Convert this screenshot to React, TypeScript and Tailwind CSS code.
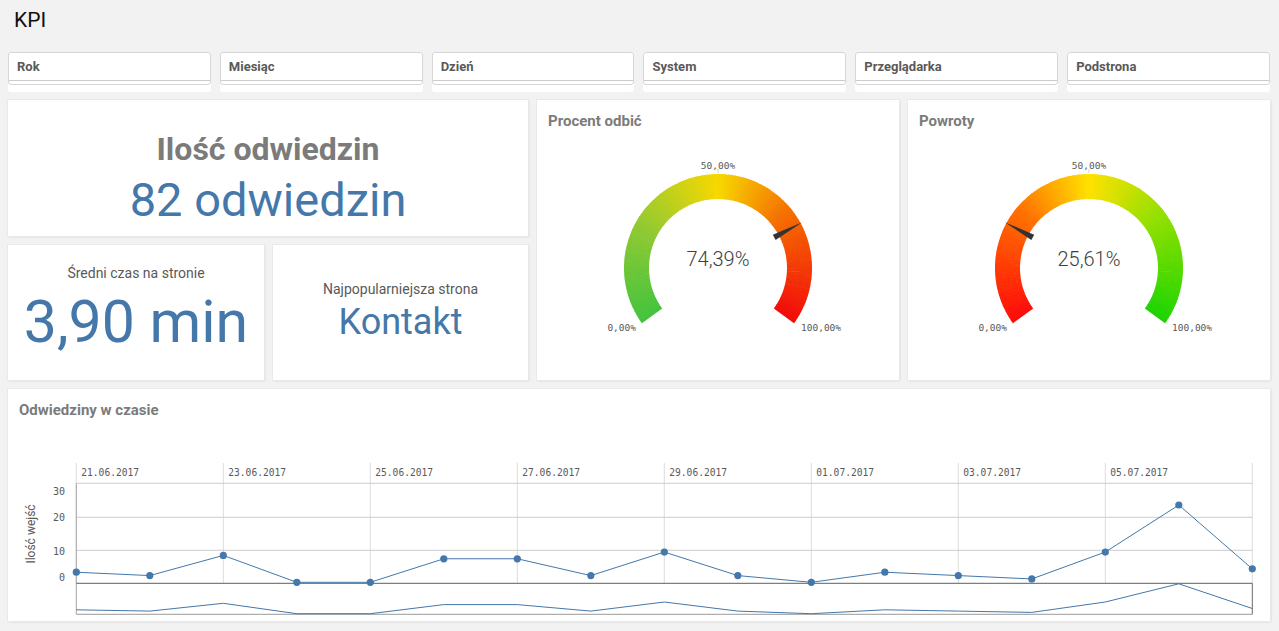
import React from "react";

type Stop = [number, string];

const GAUGE_A: Stop[] = [
  [0, "#43c33e"],
  [0.25, "#8fc932"],
  [0.5, "#f7d800"],
  [0.7, "#f57000"],
  [1, "#f20a0a"],
];

const GAUGE_B: Stop[] = [
  [0, "#ff0a0a"],
  [0.3, "#ff7000"],
  [0.5, "#ffe100"],
  [0.7, "#98e000"],
  [1, "#1cd400"],
];

const FILTERS = ["Rok", "Miesiąc", "Dzień", "System", "Przeglądarka", "Podstrona"];

const VALUES = [3, 2, 8, 0, 0, 7, 7, 2, 9, 2, 0, 3, 2, 1, 9, 23, 4];
const DATES = ["21.06.2017", "23.06.2017", "25.06.2017", "27.06.2017", "29.06.2017", "01.07.2017", "03.07.2017", "05.07.2017"];

function rgb(c: string) {
  return [1, 3, 5].map((i) => parseInt(c.slice(i, i + 2), 16));
}

function colorAt(stops: Stop[], t: number) {
  for (let i = 0; i < stops.length - 1; i++) {
    const [t0, c0] = stops[i];
    const [t1, c1] = stops[i + 1];
    if (t >= t0 && t <= t1) {
      const k = (t - t0) / (t1 - t0);
      const a = rgb(c0);
      const b = rgb(c1);
      return `rgb(${a.map((v, j) => Math.round(v + (b[j] - v) * k)).join(",")})`;
    }
  }
  return stops[stops.length - 1][1];
}

function polar(cx: number, cy: number, r: number, deg: number) {
  const a = ((deg - 90) * Math.PI) / 180;
  return [cx + r * Math.cos(a), cy + r * Math.sin(a)];
}

function sector(cx: number, cy: number, r1: number, r2: number, a0: number, a1: number) {
  const [x0, y0] = polar(cx, cy, r2, a0);
  const [x1, y1] = polar(cx, cy, r2, a1);
  const [x2, y2] = polar(cx, cy, r1, a1);
  const [x3, y3] = polar(cx, cy, r1, a0);
  return `M${x0} ${y0} A${r2} ${r2} 0 0 1 ${x1} ${y1} L${x2} ${y2} A${r1} ${r1} 0 0 0 ${x3} ${y3} Z`;
}

function Panel({ className = "", children }: { className?: string; children: React.ReactNode }) {
  return (
    <div className={`bg-white shadow-[0_0_0_1px_#e9e9e9,1px_1px_2px_rgba(0,0,0,0.14)] ${className}`}>{children}</div>
  );
}

function Gauge({ title, value, label, stops }: { title: string; value: number; label: string; stops: Stop[] }) {
  const cx = 181;
  const cy = 168;
  const start = -126;
  const span = 252;
  const n = 120;
  const segs = Array.from({ length: n }, (_, i) => {
    const a0 = start + (span * i) / n;
    const a1 = start + (span * (i + 1)) / n + (i < n - 1 ? 0.4 : 0);
    return <path key={i} d={sector(cx, cy, 69, 94, a0, a1)} fill={colorAt(stops, (i + 0.5) / n)} />;
  });
  const ang = start + span * value;
  const [tx, ty] = polar(cx, cy, 96, ang);
  const [bx, by] = polar(cx, cy, 64, ang);
  const [px, py] = polar(0, 0, 3, ang + 90);
  const [t0x, t0y] = polar(cx, cy, 95, 0);
  const [t1x, t1y] = polar(cx, cy, 99, 0);

  return (
    <Panel className="flex h-[280px] flex-col">
      <div className="h-[42px] shrink-0 pl-[11px] pt-[12px] text-[15px] font-bold leading-[18px] text-[#7b7b7b]">{title}</div>
      <svg width="362" height="238" viewBox="0 42 362 238">
        {segs}
        <line x1={t0x} y1={t0y} x2={t1x} y2={t1y} stroke="#cfcfcf" strokeWidth="1" />
        <polygon points={`${tx},${ty} ${bx + px},${by + py} ${bx - px},${by - py}`} fill="#333333" />
        <text x={cx} y="69" textAnchor="middle" className="fill-[#595959] font-['DejaVu_Sans_Mono',monospace] text-[9.5px]">
          50,00%
        </text>
        <text x="99" y="231" textAnchor="end" className="fill-[#595959] font-['DejaVu_Sans_Mono',monospace] text-[9.5px]">
          0,00%
        </text>
        <text x="264" y="231" textAnchor="start" className="fill-[#595959] font-['DejaVu_Sans_Mono',monospace] text-[9.5px]">
          100,00%
        </text>
        <text x={cx} y="165.5" textAnchor="middle" className="fill-[#404040] text-[20px] font-light">
          {label}
        </text>
      </svg>
    </Panel>
  );
}

function VisitsChart() {
  const gx = (k: number) => 76.3 + 147 * k;
  const px = (i: number) => 76.3 + 73.5 * i;
  const py = (v: number) => 582.3 - 3.36 * v;
  const ny = (v: number) => 613.7 - 1.3 * v;
  const line = VALUES.map((v, i) => `${i ? "L" : "M"}${px(i)} ${py(v)}`).join(" ");
  const nav = VALUES.map((v, i) => `${i ? "L" : "M"}${px(i)} ${ny(v)}`).join(" ");
  const ticks: [string, number, number][] = [
    ["30", 483.3, 491.5],
    ["20", 517.3, 517.5],
    ["10", 550.3, 551],
    ["0", 583.3, 577.5],
  ];

  return (
    <Panel className="flex h-[232px] flex-col">
      <div className="h-[41px] shrink-0 pl-[11px] pt-[12px] text-[15px] font-bold leading-[18px] text-[#7b7b7b]">
        Odwiedziny w czasie
      </div>
      <svg width="1262" height="191" viewBox="8 430 1262 191">
        {Array.from({ length: 9 }, (_, k) => (
          <line key={k} x1={gx(k)} y1="463" x2={gx(k)} y2="583.3" stroke="#dcdcdc" strokeWidth="1" />
        ))}
        {ticks.slice(0, 3).map(([t, y]) => (
          <line key={t} x1="76.3" y1={y} x2="1252.3" y2={y} stroke="#cccccc" strokeWidth="1" />
        ))}
        {DATES.map((d, k) => (
          <text key={d} x={gx(k) + 5} y="475.5" className="fill-[#595959] font-['DejaVu_Sans_Mono',monospace] text-[9.6px]">
            {d}
          </text>
        ))}
        {ticks.map(([t, , y]) => (
          <text key={t} x="65" y={y + 3.5} textAnchor="end" className="fill-[#595959] font-['DejaVu_Sans_Mono',monospace] text-[10px]">
            {t}
          </text>
        ))}
        <text
          x="0"
          y="0"
          transform="translate(35 534) rotate(-90)"
          textAnchor="middle"
          className="fill-[#595959] text-[12px]"
        >
          Ilość wejść
        </text>
        <line x1="76.3" y1="483.3" x2="76.3" y2="614.3" stroke="#a6a6a6" strokeWidth="1" />
        <line x1="76.3" y1="614.3" x2="1252.3" y2="614.3" stroke="#9a9a9a" strokeWidth="1" />
        <line x1="1252.3" y1="583.3" x2="1252.3" y2="614.3" stroke="#6b6b6b" strokeWidth="1" />
        <line x1="76.3" y1="583.3" x2="1252.3" y2="583.3" stroke="#5e5e5e" strokeWidth="1" />
        <path d={nav} fill="none" stroke="#4477aa" strokeWidth="1" />
        <path d={line} fill="none" stroke="#4477aa" strokeWidth="1" />
        {VALUES.map((v, i) => (
          <circle key={i} cx={px(i)} cy={py(v)} r="3.6" fill="#4477aa" />
        ))}
      </svg>
    </Panel>
  );
}

export default function App() {
  return (
    <div className="h-[631px] w-[1279px] overflow-hidden bg-[#f2f2f2] pl-[8px] pr-[9px] font-[Roboto,'Liberation_Sans',sans-serif]">
      <div className="flex h-[44px] items-center pb-[3px] pl-[6px] text-[21px] leading-none text-[#111]">KPI</div>

      <div className="mt-[8px] grid grid-cols-6 gap-[9px]">
        {FILTERS.map((f) => (
          <div key={f} className="flex h-[40px] flex-col rounded-[3px] bg-white">
            <div className="flex h-[33px] flex-col rounded-[3px] border border-[#d6d6d6]">
              <div className="flex flex-1 items-center pl-[8px] text-[13px] font-bold text-[#595959]">{f}</div>
              <div className="h-[4px] border-t border-[#cccccc]" />
            </div>
          </div>
        ))}
      </div>

      <div className="mt-[8px] grid grid-cols-[520px_362px_362px] gap-[9px]">
        <div className="flex flex-col gap-[9px]">
          <Panel className="h-[136px] pt-[31px] text-center">
            <div className="text-[32px] font-bold leading-[36px] text-[#7b7b7b]">Ilość odwiedzin</div>
            <div className="mt-[5px] text-[47px] leading-[56px] text-[#4477aa]">82 odwiedzin</div>
          </Panel>
          <div className="grid grid-cols-[256px_255px] gap-[9px]">
            <Panel className="h-[135px] pt-[18px] text-center">
              <div className="text-[14px] leading-[20px] text-[#595959]">Średni czas na stronie</div>
              <div className="mt-[9px] text-[59px] leading-[60px] text-[#4477aa]">3,90 min</div>
            </Panel>
            <Panel className="h-[135px] pt-[34px] text-center">
              <div className="text-[14px] leading-[20px] text-[#595959]">Najpopularniejsza strona</div>
              <div className="mt-[3px] text-[36px] leading-[40px] text-[#4477aa]">Kontakt</div>
            </Panel>
          </div>
        </div>
        <Gauge title="Procent odbić" value={0.7439} label="74,39%" stops={GAUGE_A} />
        <Gauge title="Powroty" value={0.2561} label="25,61%" stops={GAUGE_B} />
      </div>

      <div className="mt-[9px]">
        <VisitsChart />
      </div>
    </div>
  );
}
